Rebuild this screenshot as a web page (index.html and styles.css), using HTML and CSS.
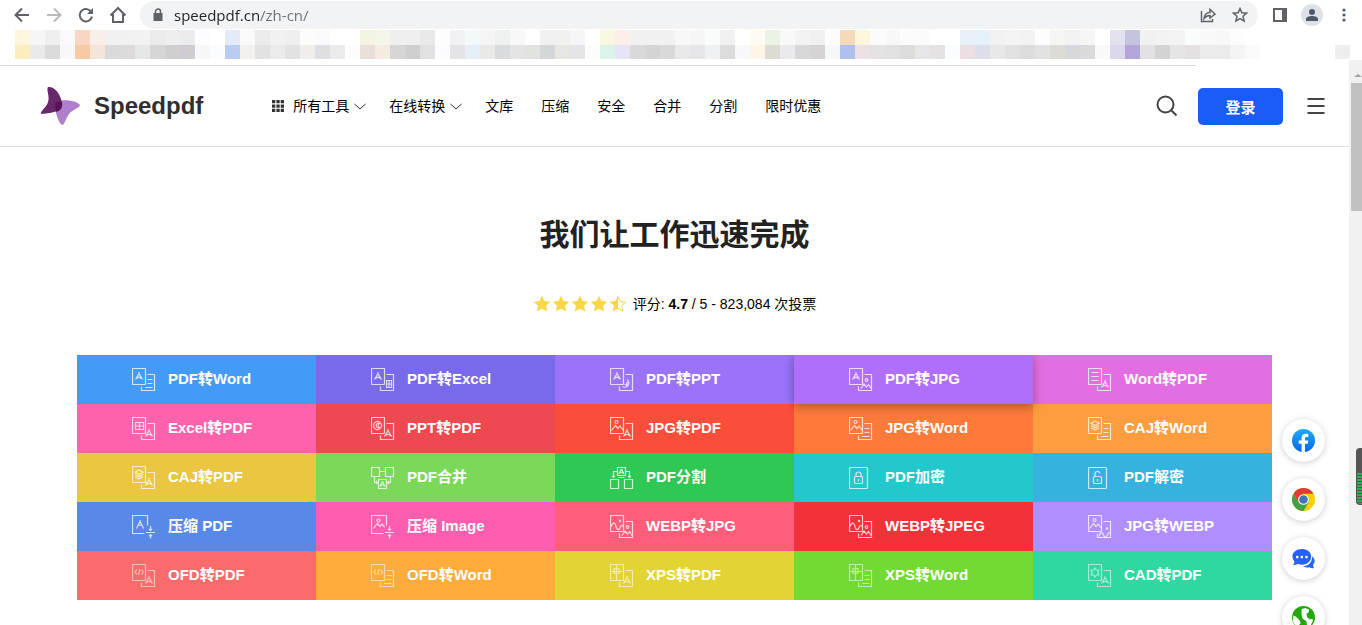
FILE: index.html
```html
<!DOCTYPE html>
<html lang="zh-CN">
<head>
    <meta charset="UTF-8">
    <meta name="viewport" content="width=device-width, initial-scale=1.0">
    <title>Speedpdf</title>
    <link rel="stylesheet" href="styles.css">
</head>
<body>
    <!-- Shared icon parts -->
    <svg class="sprite" aria-hidden="true">
        <symbol id="front" viewBox="0 0 24 24"><rect x=".5" y=".5" width="13" height="16" rx=".5"/></symbol>
        <symbol id="back" viewBox="0 0 24 24"><path d="M15.500 6.500h7v16h-13v-4"/></symbol>
        <symbol id="pdf" viewBox="0 0 24 24"><path d="M7 4v1.500L3.500 11.500M7 5.500l3.500 6M4.500 10.500Q7 8 9.500 10.500"/></symbol>
        <symbol id="pdf2" viewBox="0 0 24 24"><path d="M17 12v1.500l-3.500 6M17 13.500l3.500 6M14.500 18.500q2.500-2.500 5 0"/></symbol>
        <symbol id="lines" viewBox="0 0 24 24"><path d="M3.500 4.500h7M3.500 8.500h7M3.500 12.500h7"/></symbol>
        <symbol id="lines2" viewBox="0 0 24 24"><path d="M15.500 11.500h5M15.500 15.500h5M13 19.500h7.500"/></symbol>
        <symbol id="img" viewBox="0 0 24 24"><circle cx="6.500" cy="5" r="1.500"/><path d="M1.500 13.500l4-5 2.500 3 2-2.500 3 4"/></symbol>
        <symbol id="img2" viewBox="0 0 24 24"><circle cx="17.500" cy="12" r="1.300"/><path d="M12 20.500l3-4.500 2.500 3 2-2.500 2.500 4"/></symbol>
        <symbol id="webp" viewBox="0 0 24 24"><circle cx="10" cy="6" r=".6"/><path d="M1 11.500c2-5 4-4 5 0s3 4.500 4.500 0q1-2 2.500 0"/></symbol>
        <symbol id="webp2" viewBox="0 0 24 24"><circle cx="19" cy="13.500" r=".6"/><path d="M11 21.500c1.500-5 3.500-5 4.500-1.500s3 2 4 0q1-3 2.500-2"/></symbol>
        <symbol id="sheet" viewBox="0 0 24 24"><path d="M3.500 5.500h8v7h-8zM7.500 5.500v7M3.500 9h8"/></symbol>
        <symbol id="caj" viewBox="0 0 24 24"><path d="M7 4l4 2.200-4 2.300-4-2.300zM3 8.500l4 2.200 4-2.200M3 10.800L7 13l4-2.200"/></symbol>
        <symbol id="code" viewBox="0 0 24 24"><path d="M5 5.500L3 8l2 2.500M9.500 5.500l2 2.500-2 2.500M8 5l-1.500 6"/></symbol>
        <symbol id="xps" viewBox="0 0 24 24"><path d="M6.500 1v15M1 7.500h12M4 4.500h5v5H4z"/></symbol>
        <symbol id="chevron" viewBox="0 0 12 12"><path d="M.5 4L6 9l5.500-5"/></symbol>
        <symbol id="star" viewBox="0 0 18 18"><path d="M9 .8l2.500 5.300 5.800.7-4.300 4 1.200 5.800L9 13.700l-5.200 2.900L5 10.800l-4.300-4 5.800-.7z"/></symbol>
    </svg>

    <!-- Browser bar -->
    <div class="toolbar">
        <button class="tool" aria-label="Back"><svg width="16" height="16" viewBox="0 0 16 16"><path d="M15 8H2M8 1.500L1.500 8 8 14.500"/></svg></button>
        <button class="tool tool-off" aria-label="Forward"><svg width="16" height="16" viewBox="0 0 16 16"><path d="M1 8h13M8 1.500L14.500 8 8 14.500"/></svg></button>
        <button class="tool" aria-label="Reload"><svg width="16" height="16" viewBox="0 0 16 16"><path d="M13.500 5.500A6.200 6.200 0 1 0 14 9.500"/><path class="solid" d="M15 1v6H9z"/></svg></button>
        <button class="tool" aria-label="Home"><svg width="18" height="18" viewBox="0 0 18 18"><path d="M1.500 9.500L9 2l7.500 7.500M4 8v8h10V8"/></svg></button>
        <div class="omnibox">
            <svg class="lock" width="12" height="14" viewBox="0 0 12 14"><path class="solid" d="M1.500 5h9v8h-9z"/><path d="M3.500 6V3.500a2.500 2.500 0 0 1 5 0V6"/></svg>
            <input class="address" type="text" aria-label="Address" value="speedpdf.cn/zh-cn/">
            <button class="tool" aria-label="Share"><svg class="thin" width="16" height="16" viewBox="0 0 16 16"><path d="M1.500 4v10.500h11V12M4 11.500c.5-4 3-6 6-6V2.500l5 4.500-5 4V8.500c-3 0-4.500 1-6 3z"/></svg></button>
            <button class="tool" aria-label="Bookmark"><svg class="thin" width="16" height="16" viewBox="0 0 16 16"><path d="M8 1.500l1.900 4.300 4.700.4-3.600 3.100 1.100 4.600L8 11.500l-4.100 2.400L5 9.300 1.400 6.200l4.700-.4z"/></svg></button>
        </div>
        <button class="tool" aria-label="Side panel"><svg width="14" height="14" viewBox="0 0 14 14"><path d="M1 1h12v12H1z"/><path class="solid" d="M9 1h4v12H9z"/></svg></button>
        <button class="tool" aria-label="Profile"><svg class="avatar" width="22" height="22" viewBox="0 0 22 22"><circle class="avatar-bg" cx="11" cy="11" r="11"/><circle cx="11" cy="8" r="3"/><path d="M5 17v-2c0-2 3-3 6-3s6 1 6 3v2z"/></svg></button>
        <button class="tool" aria-label="Menu"><svg class="dots" width="4" height="14" viewBox="0 0 4 14"><circle cx="2" cy="2" r="1.600"/><circle cx="2" cy="7" r="1.600"/><circle cx="2" cy="12" r="1.600"/></svg></button>
    </div>
    <div class="bookmarks" id="bookmarks"></div>

    <div class="viewport">
        <div class="page">
            <header class="header">
                <a class="brand" href="#">
                    <svg width="40" height="40" viewBox="0 0 40 40"><path fill="#b07fcc" d="M14 16c7-3 21-2 25 3 0 3-7 4-11 9-3 4-4 9-6 11-4 0-7-11-8-17z"/><path fill="#68296b" d="M7 1c6-1 13 7 14 16 0 10-13 10-21 11-1-3 6-7 7-12C9 10 5 4 7 1z"/><path fill="#581454" d="M15 16q3-1 6 0c1 6-2 9-6 10-1-4-1-7 0-10z"/></svg>
                    <span>Speedpdf</span>
                </a>
                <nav class="nav">
                    <a class="drop" href="#"><svg class="apps" width="12" height="12" viewBox="0 0 12 12"><path d="M0 0h3.300v3.300H0zM4.400 0h3.300v3.300H4.400zM8.700 0H12v3.300H8.700zM0 4.400h3.300v3.300H0zM4.400 4.400h3.300v3.300H4.400zM8.700 4.400H12v3.300H8.700zM0 8.700h3.300V12H0zM4.400 8.700h3.300V12H4.400zM8.700 8.700H12V12H8.700z"/></svg>所有工具<svg class="chevron"><use href="#chevron"/></svg></a>
                    <a class="drop" href="#">在线转换<svg class="chevron"><use href="#chevron"/></svg></a>
                    <a href="#">文库</a>
                    <a href="#">压缩</a>
                    <a href="#">安全</a>
                    <a href="#">合并</a>
                    <a href="#">分割</a>
                    <a href="#">限时优惠</a>
                </nav>
                <button class="icon-btn" aria-label="搜索"><svg width="22" height="22" viewBox="0 0 22 22"><circle cx="9.500" cy="9.500" r="8"/><path d="M15.500 15.500l5 5"/></svg></button>
                <button class="login">登录</button>
                <button class="icon-btn" aria-label="菜单"><svg width="18" height="18" viewBox="0 0 18 18"><path d="M.5 2h17M.5 9h17M.5 16h17"/></svg></button>
            </header>

            <main class="main">
                <h1>我们让工作迅速完成</h1>
                <div class="rating">
                    <span class="stars">
                        <svg><use href="#star"/></svg>
                        <svg><use href="#star"/></svg>
                        <svg><use href="#star"/></svg>
                        <svg><use href="#star"/></svg>
                        <svg viewBox="0 0 18 18"><path d="M9 .8v12.900l-5.200 2.900L5 10.800l-4.300-4 5.800-.7z"/><path class="outline" d="M9 1.500l2.200 5 5.300.7-4 3.500 1.200 5.200L9 13.200"/></svg>
                    </span>
                    <span>评分: <b>4.7</b> / 5 - 823,084 次投票</span>
                </div>

                <div class="tools">
                    <a class="tile blue" href="#"><svg><use href="#front"/><use href="#back"/><use href="#pdf"/><use href="#lines2"/></svg>PDF转Word</a>
                    <a class="tile indigo" href="#"><svg><use href="#front"/><use href="#back"/><use href="#pdf"/><path d="M15.500 12.500h5v7h-5zM18 12.500v7M15.500 16h5"/></svg>PDF转Excel</a>
                    <a class="tile violet" href="#"><svg><use href="#front"/><use href="#back"/><use href="#pdf"/><path d="M17 11.500a4 4 0 1 1-4.500 7M16.500 14.500v2h-2M17 14a1.800 1.800 0 1 1-1 3.500"/></svg>PDF转PPT</a>
                    <a class="tile purple raised" href="#"><svg><use href="#front"/><use href="#back"/><use href="#pdf"/><use href="#img2"/></svg>PDF转JPG</a>
                    <a class="tile orchid" href="#"><svg><use href="#front"/><use href="#back"/><use href="#lines"/><use href="#pdf2"/></svg>Word转PDF</a>

                    <a class="tile pink" href="#"><svg><use href="#front"/><use href="#back"/><use href="#sheet"/><use href="#pdf2"/></svg>Excel转PDF</a>
                    <a class="tile crimson" href="#"><svg><use href="#front"/><use href="#back"/><path d="M8.500 5a4 4 0 1 0 0 7M8.500 7a2 2 0 1 0 0 3M9 5.500l2 3-2 3-2-3z"/><use href="#pdf2"/></svg>PPT转PDF</a>
                    <a class="tile tomato" href="#"><svg><use href="#front"/><use href="#back"/><use href="#img"/><use href="#pdf2"/></svg>JPG转PDF</a>
                    <a class="tile orange" href="#"><svg><use href="#front"/><use href="#back"/><use href="#img"/><use href="#lines2"/></svg>JPG转Word</a>
                    <a class="tile amber" href="#"><svg><use href="#front"/><use href="#back"/><use href="#caj"/><use href="#lines2"/></svg>CAJ转Word</a>

                    <a class="tile gold" href="#"><svg><use href="#front"/><use href="#back"/><use href="#caj"/><use href="#pdf2"/></svg>CAJ转PDF</a>
                    <a class="tile lime" href="#"><svg><path d="M.5 1.500h8v9h-8zM14.500 1.500h8v9h-8zM7.500 13.500h8v9h-8zM3.500 11v5.500h3M5 15l1.500 1.500L5 18M19.500 11v5.500h-3M18 15l-1.500 1.500L18 18M11.500 15.500l-2.500 5M11.500 15.500l2.500 5M9.500 19.500q2-1 4 0M8.500 5.500h6"/></svg>PDF合并</a>
                    <a class="tile green" href="#"><svg><path d="M7.500 1.500h8v8h-8zM.5 13.500h8v9h-8zM14.500 13.500h8v9h-8zM7 5.500H3.500v6M2 10l1.500 1.500L5 10M16 5.500h3.500v6M18 10l1.500 1.500L21 10M11.500 3L9 8M11.500 3L14 8M9.500 7q2-1 4 0M8.500 11.500h6"/></svg>PDF分割</a>
                    <a class="tile cyan" href="#"><svg><rect x=".5" y="1.500" width="18" height="21" rx="1"/><rect x="5.500" y="10.500" width="8" height="7" rx="1"/><path d="M7 10.500V8.500a2.500 2.500 0 0 1 5 0v2M9.500 13v2.500"/></svg>PDF加密</a>
                    <a class="tile sky" href="#"><svg><rect x=".5" y="1.500" width="18" height="21" rx="1"/><rect x="5.500" y="10.500" width="8" height="7" rx="1"/><path d="M7 10.500V8.500a2.500 2.500 0 0 1 5-1M9.500 13v2.500"/></svg>PDF解密</a>

                    <a class="tile royal" href="#"><svg><path d="M12.500 18.500H.5V.5h15v10M8 5v1.500l-3.500 7M8 6l3.500 7.500M5.500 11q2.500-2 5 0M14 17.500h9M18.500 11v4.500M17 14l1.500 1.500L20 14M18.500 23.500v-4M17 21l1.500-1.500L20 21"/></svg>压缩 PDF</a>
                    <a class="tile pink2" href="#"><svg><circle cx="7.500" cy="5.500" r="1.500"/><path d="M12.500 18.500H.5V.5h15v10M2.500 13.500l4-5 2.500 3 2-2.500 2.500 3M14 17.500h9M18.500 11v4.500M17 14l1.500 1.500L20 14M18.500 23.500v-4M17 21l1.500-1.500L20 21"/></svg>压缩 Image</a>
                    <a class="tile rose" href="#"><svg><use href="#front"/><use href="#back"/><use href="#webp"/><use href="#img2"/></svg>WEBP转JPG</a>
                    <a class="tile red" href="#"><svg><use href="#front"/><use href="#back"/><use href="#webp"/><use href="#img2"/></svg>WEBP转JPEG</a>
                    <a class="tile lavender" href="#"><svg><use href="#front"/><use href="#back"/><use href="#img"/><use href="#webp2"/></svg>JPG转WEBP</a>

                    <a class="tile coral soft" href="#"><svg><use href="#front"/><use href="#back"/><use href="#code"/><use href="#pdf2"/></svg>OFD转PDF</a>
                    <a class="tile mango soft" href="#"><svg><use href="#front"/><use href="#back"/><use href="#code"/><use href="#lines2"/></svg>OFD转Word</a>
                    <a class="tile mustard soft" href="#"><svg><use href="#front"/><use href="#back"/><use href="#xps"/><use href="#pdf2"/></svg>XPS转PDF</a>
                    <a class="tile grass soft" href="#"><svg><use href="#front"/><use href="#back"/><use href="#xps"/><use href="#lines2"/></svg>XPS转Word</a>
                    <a class="tile mint soft" href="#"><svg><use href="#front"/><use href="#back"/><path d="M7 4l1.300 2h2.500L9.700 8.500l1.100 2.500H8.300L7 13l-1.300-2H3.200l1.100-2.500L3.200 6h2.500z"/><use href="#pdf2"/></svg>CAD转PDF</a>
                </div>
            </main>
        </div>

        <div class="scrollbar">
            <div class="scroll-up"></div>
            <div class="scroll-thumb"></div>
        </div>
    </div>

    <!-- Floating contact buttons -->
    <div class="floats">
        <a href="#" aria-label="Facebook"><svg viewBox="0 0 24 24"><defs><linearGradient id="fb" x2="0" y2="1"><stop stop-color="#1fabf8"/><stop offset="1" stop-color="#0866ee"/></linearGradient></defs><circle cx="12" cy="12" r="12" fill="url(#fb)"/><path fill="#fff" d="M10 24v-8.500H7V12h3V9.500C10 6.300 12 5 14.500 5c1 0 2 .2 2.500.3v3h-1.500c-1.500 0-2 .7-2 1.700v2H17l-.6 3.500h-2.900V24z"/></svg></a>
        <a href="#" aria-label="Chrome"><svg viewBox="0 0 24 24"><circle cx="12" cy="12" r="12" fill="#fc0"/><path fill="#e03c31" d="M12 12V6h10.400A12 12 0 0 0 1.600 6l5.200 9z"/><path fill="#43a047" d="M1.600 6A12 12 0 0 0 12 24l5.200-9L12 12l-5.200 3z"/><circle cx="12" cy="12" r="5.600" fill="#fff"/><circle cx="12" cy="12" r="4.500" fill="#3b78b5"/></svg></a>
        <a href="#" aria-label="在线客服"><svg viewBox="0 0 24 24"><path fill="#2563f5" d="M21 10c3 2 3.500 6 1 8.500 0 1.500.5 2.500 1 3.500-2 .3-3.500-.3-4.500-1-2.500.7-5 .3-7-1 6 0 9.500-4 9.500-10z"/><path fill="#2563f5" d="M10.500 2C17 2 20 6 20 10s-3 8.500-9.500 8.500c-1.500 0-3-.3-4.500-1-1 1-3 1.500-5 1.500 1-1 1.500-2.500 1.500-4C-2.500 9 2 2 10.500 2z"/><g fill="#fff"><circle cx="5.500" cy="10.500" r="1.400"/><circle cx="10.300" cy="10.500" r="1.400"/><circle cx="15.100" cy="10.500" r="1.400"/></g></svg></a>
        <a href="#" aria-label="语言"><svg viewBox="0 0 24 24"><circle cx="12" cy="12" r="12" fill="#24a70b"/><path fill="#fff" d="M10 3l4-1 4 2-1 3-2 1 1 4 3 2 2-1 1 2-3 6-3 1-1-6-4-3-1-4zM1 10l3 1 4 4 1 3-2 2 1 3-4-2-3-5z"/></svg></a>
    </div>
    <div class="meter"></div>

    <script src="script.js"></script>
</body>
</html>
```
FILE: styles.css
```css
* {
    box-sizing: border-box;
}
body {
    margin: 0;
    height: 100vh;
    display: flex;
    flex-direction: column;
    overflow: hidden;
    background: #fff;
    color: #000;
    font-family: "Liberation Sans", "Noto Sans CJK SC", sans-serif;
    font-size: 14px;
}
a {
    color: inherit;
    text-decoration: none;
}
button {
    padding: 0;
    border: 0;
    background: none;
    font-family: inherit;
    cursor: pointer;
}
svg {
    display: block;
    flex: none;
    fill: none;
}
.sprite {
    position: absolute;
    width: 0;
    height: 0;
}

/* browser bar */
.toolbar {
    display: flex;
    align-items: center;
    flex: none;
    height: 30px;
    padding: 0 2px 0 6px;
}
.tool {
    display: flex;
    align-items: center;
    justify-content: center;
    flex: none;
    width: 32px;
    height: 28px;
}
.tool svg,
.lock {
    stroke: #5f6368;
    stroke-width: 2;
}
.tool .thin {
    stroke-width: 1.5;
}
.tool-off svg {
    stroke: #bababa;
}
.solid {
    fill: #5f6368;
    stroke: none;
}
.tool .avatar,
.tool .dots {
    fill: #4f596c;
    stroke: none;
}
.avatar-bg {
    fill: #dee1e6;
}
.omnibox {
    display: flex;
    align-items: center;
    flex: 1;
    height: 28px;
    margin: 0 6px;
    padding: 0 2px 0 12px;
    border-radius: 14px;
    background: #f1f3f4;
}
.lock {
    stroke-width: 1.5;
}
.address {
    flex: 1;
    min-width: 0;
    margin-left: 10px;
    padding: 0;
    border: 0;
    outline: 0;
    font-family: "Open Sans", sans-serif;
    font-size: 15px;
    line-height: 20px;
    /* host dark, path grey */
    background: linear-gradient(to right, #202124 85px, #6b6f74 85px);
    -webkit-background-clip: text;
    background-clip: text;
    color: transparent;
}
.bookmarks {
    display: grid;
    grid-template-rows: 15px 14px;
    grid-auto-flow: column;
    grid-auto-columns: 15px;
    flex: none;
    height: 30px;
    padding-left: 15px;
}

/* page */
.viewport {
    display: flex;
    flex: 1;
    min-height: 0;
}
.page {
    flex: 1;
    min-width: 0;
    padding-top: 5px;
}
.page::before {
    content: "";
    display: block;
    width: calc(100% - 153px);
    height: 1px;
    background: #dcdcdc;
}
.header {
    display: flex;
    align-items: center;
    height: 81px;
    padding: 0 24px 0 41px;
    border-bottom: 1px solid #dcdcdc;
}
.brand {
    display: flex;
    align-items: center;
    gap: 13px;
    color: #2f2f2f;
    font-size: 24px;
    font-weight: bold;
}
.nav {
    display: flex;
    flex: 1;
    margin-left: 69px;
}
.nav a {
    display: flex;
    align-items: center;
    margin-right: 28px;
    line-height: 20px;
    white-space: nowrap;
}
.nav .drop {
    margin-right: 23px;
}
.apps {
    margin-right: 9px;
    fill: #333;
}
.chevron {
    width: 12px;
    height: 12px;
    margin-left: 5px;
    stroke: #333;
}
.icon-btn svg {
    stroke: #444;
    stroke-width: 2;
}
.login {
    width: 85px;
    height: 37px;
    margin: 0 24px 0 20px;
    border-radius: 5px;
    background: #195cfa;
    color: #fff;
    font-size: 15px;
    font-weight: bold;
}
.main {
    padding: 66px 77px 0;
}
h1 {
    margin: 0;
    color: #222;
    font-size: 30px;
    line-height: 44px;
    text-align: center;
}
.rating {
    display: flex;
    align-items: center;
    justify-content: center;
    gap: 6px;
    margin: 37px 0 41px;
    line-height: 20px;
}
.stars {
    display: flex;
    gap: 1px;
}
.stars svg {
    width: 18px;
    height: 18px;
    fill: #fad648;
}
.stars .outline {
    fill: none;
    stroke: #fad648;
}

/* tool grid */
.tools {
    display: grid;
    grid-template-columns: repeat(5, 1fr);
}
.tile {
    display: flex;
    gap: 12px;
    height: 49px;
    padding: 13px 0 0 55px;
    color: #fff;
    font-size: 15px;
    font-weight: bold;
    line-height: 22px;
    white-space: nowrap;
}
.tile svg {
    width: 24px;
    height: 24px;
    stroke: #fff;
    stroke-width: 1.2;
    stroke-opacity: 0.75;
}
.soft svg {
    stroke-opacity: 0.55;
}
.raised {
    position: relative;
    box-shadow: 0 2px 10px rgba(0, 0, 0, 0.35);
    clip-path: inset(0 -12px -14px -12px);
}
.blue { background: #449bf5; }
.indigo { background: #796aeb; }
.violet { background: #9b73f9; }
.purple { background: #b06ff9; }
.orchid { background: #e26fe2; }
.pink { background: #ff62ad; }
.crimson { background: #ee4950; }
.tomato { background: #fb4e3a; }
.orange { background: #fd7a3a; }
.amber { background: #fd9d3f; }
.gold { background: #ebc640; }
.lime { background: #7cd858; }
.green { background: #2fc855; }
.cyan { background: #22c8cc; }
.sky { background: #35b3de; }
.royal { background: #5989e8; }
.pink2 { background: #ff5eb0; }
.rose { background: #ff5e7a; }
.red { background: #f23238; }
.lavender { background: #b08eff; }
.coral { background: #fa6b6b; }
.mango { background: #ffac3d; }
.mustard { background: #e2d433; }
.grass { background: #72da33; }
.mint { background: #30d8a1; }

/* scrollbar */
.scrollbar {
    flex: none;
    width: 13px;
    background: #f1f1f1;
}
.scroll-up {
    height: 23px;
    padding: 14px 0 0 5px;
}
.scroll-up::before {
    content: "";
    display: block;
    width: 0;
    border: 4px solid transparent;
    border-top: 0;
    border-bottom: 3px solid #a3a3a3;
}
.scroll-thumb {
    height: 128px;
    margin-left: 2px;
    background: #c1c1c1;
}

/* overlays */
.floats {
    position: fixed;
    top: 419px;
    right: 37px;
    display: flex;
    flex-direction: column;
    gap: 16px;
}
.floats a {
    display: flex;
    align-items: center;
    justify-content: center;
    width: 43px;
    height: 43px;
    border-radius: 50%;
    background: #fff;
    box-shadow: 0 1px 6px rgba(0, 0, 0, 0.2);
}
.floats svg {
    width: 23px;
    height: 23px;
}
.meter {
    position: fixed;
    top: 448px;
    right: 0;
    width: 6px;
    height: 57px;
    border: 1px solid #555;
    border-right: 0;
    border-radius: 4px 0 0 4px;
    background: linear-gradient(#555 23px, transparent 23px), repeating-linear-gradient(#2fae55 0 2px, #555 2px 3px);
}
```
FILE: script.js
```js
// colours of the blurred bookmarks, left to right
const top_row = 'fdf6dc f6f6f6 efefef fafafc f8d6c2 faeee8 f1f1f1 f1f1f1 f2f2f2 ebebeb eeeeee ebecee fdfdff ffffff e4eaf8 fafafa ebebeb f1f1f1 efefef fcfcfa fafafa ffffff ffffff f3f4e2 f1f8e9 efefef efefef e8eae9 fdfdfd f2f2f4 f3f8fb f5f5f5 eff1f0 f8f8f8 ffffff f1f1f1 f1f1f1 f6f6f6 ffffff f9f7e0 feeee8 f1f1f1 f1f1f1 f1f1f1 f8f8f8 f6f6f6 fafcfb f1f1f1 ffffff fefbf0 ebf4e4 f9f9f9 f3f3f3 f0f0f0 fcfcfc f6d8ba fcf7db fbfbfb f8f8f8 fcfcfc fbfbfb ffffff ffffff e8f1f8 e5f2fb f2f2f2 f3f4f3 f3f3f3 fdfdfd f5f5f1 f3f3f3 f5f7f6 ffffff e3e3ee c5c4de f1f1f1 f3f3f3 f4f4f4 fbfdfc f9f9f9 f8f8f8 fcfdfc ffffff ffffff ffffff ffffff ffffff ffffff ffffff'.split(' ');
const bottom_row = 'fbedc0 ebeaea dadcdb f8f8fb f7c9a5 f3e5dc dadada dddbda e5e8e6 d6d6d6 d0cecf cfcdd2 f7f7f7 fafcff b9cdf1 f3f1ef e2e2e2 ebebeb e2e2e3 efeeec dedfe2 ebebec fcfcfc e8dfd9 f5ebe1 d7d5d6 cfcfcf e1e1df fafcff e5e3e6 e6eff7 e9e9e7 d9dbdd e4e4e4 e1e3e1 d4d6d8 e8e6e3 e3e5e8 fcfcfc daf5e7 e6e4f7 d9d9d9 d5d3d3 d9d9d9 e9e9e9 e6e6e9 eff1f3 dcdcdc f8f8f8 fef4e7 dedad4 ebe9ec d8d8da d6d3d5 f5f7f9 b0c0ed eee1e6 e4e2e3 e1e1e2 dddcda e6e5e7 e4e3e1 fafdff ebdfe4 dedee8 e8e8e6 e1e1e1 dcdcdc e2e2e2 dddbd5 d6d8db dadada f9f9f9 dcd7ec b4a5da e3e1e3 d3d3d3 e5e5e5 e3e1e2 ebebeb ebebeb f4f4f4 fafafa ffffff ffffff ffffff ffffff ffffff eeeeee'.split(' ');

const bar = document.getElementById('bookmarks');
top_row.forEach((colour, i) => {
    [colour, bottom_row[i]].forEach(c => {
        const cell = document.createElement('span');
        cell.style.backgroundColor = '#' + c;
        bar.appendChild(cell);
    });
});
```
